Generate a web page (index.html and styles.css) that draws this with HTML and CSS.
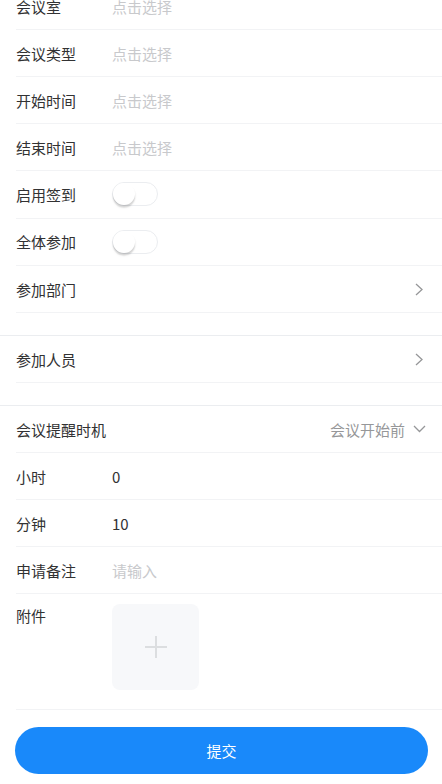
FILE: index.html
```html
<!DOCTYPE html>
<html lang="zh-CN">
<head>
  <meta charset="UTF-8">
  <meta name="viewport" content="width=device-width, initial-scale=1.0">
  <title>会议申请</title>
  <link rel="stylesheet" href="styles.css">
</head>
<body>

  <!-- Meeting form -->
  <form class="form">
    <div class="cell">
      <div class="cell-inner">
        <span class="label">会议室</span>
        <span class="value placeholder">点击选择</span>
      </div>
    </div>
    <div class="cell">
      <div class="cell-inner">
        <span class="label">会议类型</span>
        <span class="value placeholder">点击选择</span>
      </div>
    </div>
    <div class="cell">
      <div class="cell-inner">
        <span class="label">开始时间</span>
        <span class="value placeholder">点击选择</span>
      </div>
    </div>
    <div class="cell">
      <div class="cell-inner">
        <span class="label">结束时间</span>
        <span class="value placeholder">点击选择</span>
      </div>
    </div>
    <div class="cell cell-switch">
      <div class="cell-inner">
        <span class="label">启用签到</span>
        <span class="switch"><span class="switch-node"></span></span>
      </div>
    </div>
    <div class="cell cell-switch">
      <div class="cell-inner">
        <span class="label">全体参加</span>
        <span class="switch"><span class="switch-node"></span></span>
      </div>
    </div>
    <div class="cell">
      <div class="cell-inner">
        <span class="label">参加部门</span>
        <span class="value"></span>
        <svg class="arrow" width="8" height="13" viewBox="0 0 8 13"><path d="M1 1 L7 6.5 L1 12" fill="none" stroke="#969799" stroke-width="1.3"/></svg>
      </div>
    </div>
    <div class="spacer"></div>

    <div class="cell">
      <div class="cell-inner">
        <span class="label">参加人员</span>
        <span class="value"></span>
        <svg class="arrow" width="8" height="13" viewBox="0 0 8 13"><path d="M1 1 L7 6.5 L1 12" fill="none" stroke="#969799" stroke-width="1.3"/></svg>
      </div>
    </div>
    <div class="spacer"></div>

    <div class="cell">
      <div class="cell-inner">
        <span class="label label-wide">会议提醒时机</span>
        <span class="dropdown">会议开始前</span>
        <svg class="arrow-down" width="13" height="8" viewBox="0 0 13 8"><path d="M1 1 L6.5 6.5 L12 1" fill="none" stroke="#969799" stroke-width="1.3"/></svg>
      </div>
    </div>
    <div class="cell">
      <div class="cell-inner">
        <span class="label">小时</span>
        <span class="value">0</span>
      </div>
    </div>
    <div class="cell">
      <div class="cell-inner">
        <span class="label">分钟</span>
        <span class="value">10</span>
      </div>
    </div>
    <div class="cell">
      <div class="cell-inner">
        <span class="label">申请备注</span>
        <span class="value placeholder">请输入</span>
      </div>
    </div>
    <div class="cell">
      <div class="cell-inner cell-upload">
        <span class="label">附件</span>
        <div class="uploader">
          <svg width="22" height="22" viewBox="0 0 22 22"><path d="M11 0 V22 M0 11 H22" stroke="#dcdee0" stroke-width="2"/></svg>
        </div>
      </div>
    </div>

    <div class="submit-wrap">
      <button type="button" class="submit">提交</button>
    </div>
  </form>

</body>
</html>
```

FILE: styles.css
```css
/* Page */
body {
  margin: 0;
  background-color: #fff;
  font-family: "Noto Sans CJK SC", "Noto Sans", sans-serif;
  font-size: 15px;
  color: #323233;
}

.form {
  margin-top: -17px;
}

/* Cells */
.cell {
  padding-left: 16px;
  background-color: #fff;
}

.cell-inner {
  display: flex;
  align-items: center;
  height: 46px;
  padding-right: 16px;
  border-bottom: 1px solid #f2f3f5;
  line-height: 23px;
}

.cell-switch .cell-inner {
  height: 46.5px;
}

.label {
  flex: 0 0 84px;
  margin-right: 12px;
}

.label-wide {
  flex: 0 0 auto;
}

.value {
  flex: 1;
}

.placeholder {
  color: #c8c9cc;
}

.arrow {
  flex: 0 0 auto;
  margin-right: 3px;
}

.dropdown {
  flex: 1;
  text-align: right;
  color: #969799;
}

.arrow-down {
  flex: 0 0 auto;
  margin-left: 8px;
}

.spacer {
  height: 22px;
  border-bottom: 1px solid #ebedf0;
}

/* Switch */
.switch {
  display: flex;
  align-items: center;
  box-sizing: border-box;
  width: 46px;
  height: 24px;
  border: 1px solid #ebedf0;
  border-radius: 12px;
  background-color: #fff;
}

.switch-node {
  width: 22px;
  height: 22px;
  border-radius: 50%;
  background-color: #fff;
  box-shadow: 0 3px 1px 0 rgba(0, 0, 0, 0.05), 0 2px 2px 0 rgba(0, 0, 0, 0.1), 0 3px 3px 0 rgba(0, 0, 0, 0.05);
}

/* Uploader */
.cell-upload {
  height: auto;
  align-items: flex-start;
  padding-top: 10px;
  padding-bottom: 11px;
}

.uploader {
  display: flex;
  align-items: center;
  justify-content: center;
  width: 87px;
  height: 86px;
  margin-bottom: 8px;
  border-radius: 8px;
  background-color: #f7f8fa;
}

/* Submit */
.submit-wrap {
  padding: 17px 14px 0 15px;
}

.submit {
  display: block;
  width: 100%;
  height: 47px;
  border: none;
  border-radius: 24px;
  background-color: #1989fa;
  color: #fff;
  font-family: inherit;
  font-size: 15px;
  cursor: pointer;
}
```
